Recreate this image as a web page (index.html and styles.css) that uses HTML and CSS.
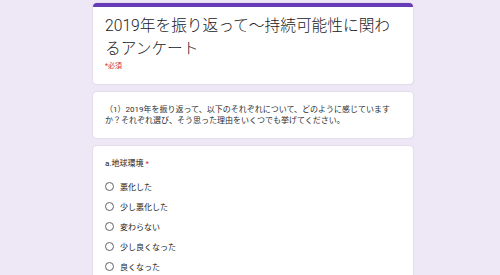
FILE: index.html
```html
<!DOCTYPE html>
<html lang="ja">
<head>
    <meta charset="UTF-8">
    <title>2019年を振り返って～持続可能性に関わるアンケート</title>
    <link rel="stylesheet" href="styles.css">
</head>
<body>
    <div class="form">
        <div class="card card-head">
            <h1 class="form-title">2019年を振り返って～持続可能性に関わるアンケート</h1>
            <div class="required-note">*必須</div>
        </div>
        <div class="card">
            <p class="description">（1）2019年を振り返って、以下のそれぞれについて、どのように感じていますか？それぞれ選び、そう思った理由をいくつでも挙げてください。</p>
        </div>
        <div class="card">
            <div class="question">a.地球環境 <span class="star">*</span></div>
            <div class="options">
                <label class="option"><span class="radio"></span>悪化した</label>
                <label class="option"><span class="radio"></span>少し悪化した</label>
                <label class="option"><span class="radio"></span>変わらない</label>
                <label class="option"><span class="radio"></span>少し良くなった</label>
                <label class="option"><span class="radio"></span>良くなった</label>
            </div>
        </div>
    </div>
</body>
</html>
```

FILE: styles.css
```css
body {
    margin: 0;
    background-color: #ede7f6;
    font-family: Roboto, "Noto Sans CJK JP", sans-serif;
    color: #202124;
}
.form { width: 320px; margin-left: 93px; padding-top: 3px; }
.card {
    background-color: #fff;
    border-radius: 4px;
    box-shadow: 0 0 0 1px #e3ddee, 1px 1px 1px rgba(0,0,0,0.05);
    padding: 12px 16px 12px 12px;
    margin-bottom: 8px;
}
.card-head {
    border-top: 4px solid #673ab7;
    border-radius: 4px;
    padding-top: 7px;
}
.form-title {
    margin: 0 2px 0 0;
    font-size: 15.7px;
    font-weight: 300;
    line-height: 23px;
}
.required-note {
    margin-top: 1px;
    font-size: 7px;
    line-height: 11px;
    color: #d93025;
}
.description {
    margin: 0;
    font-size: 8px;
    line-height: 11px;
    color: #2d2e30;
}
.question { font-size: 8px; line-height: 11px; }
.star { color: #d93025; }
.options { margin-top: 8px; }
.option {
    display: flex;
    align-items: center;
    height: 19.8px;
    font-size: 8px;
}
.radio {
    width: 7px;
    height: 7px;
    border: 1.5px solid #5f6368;
    border-radius: 50%;
    margin-right: 6px;
}
```
